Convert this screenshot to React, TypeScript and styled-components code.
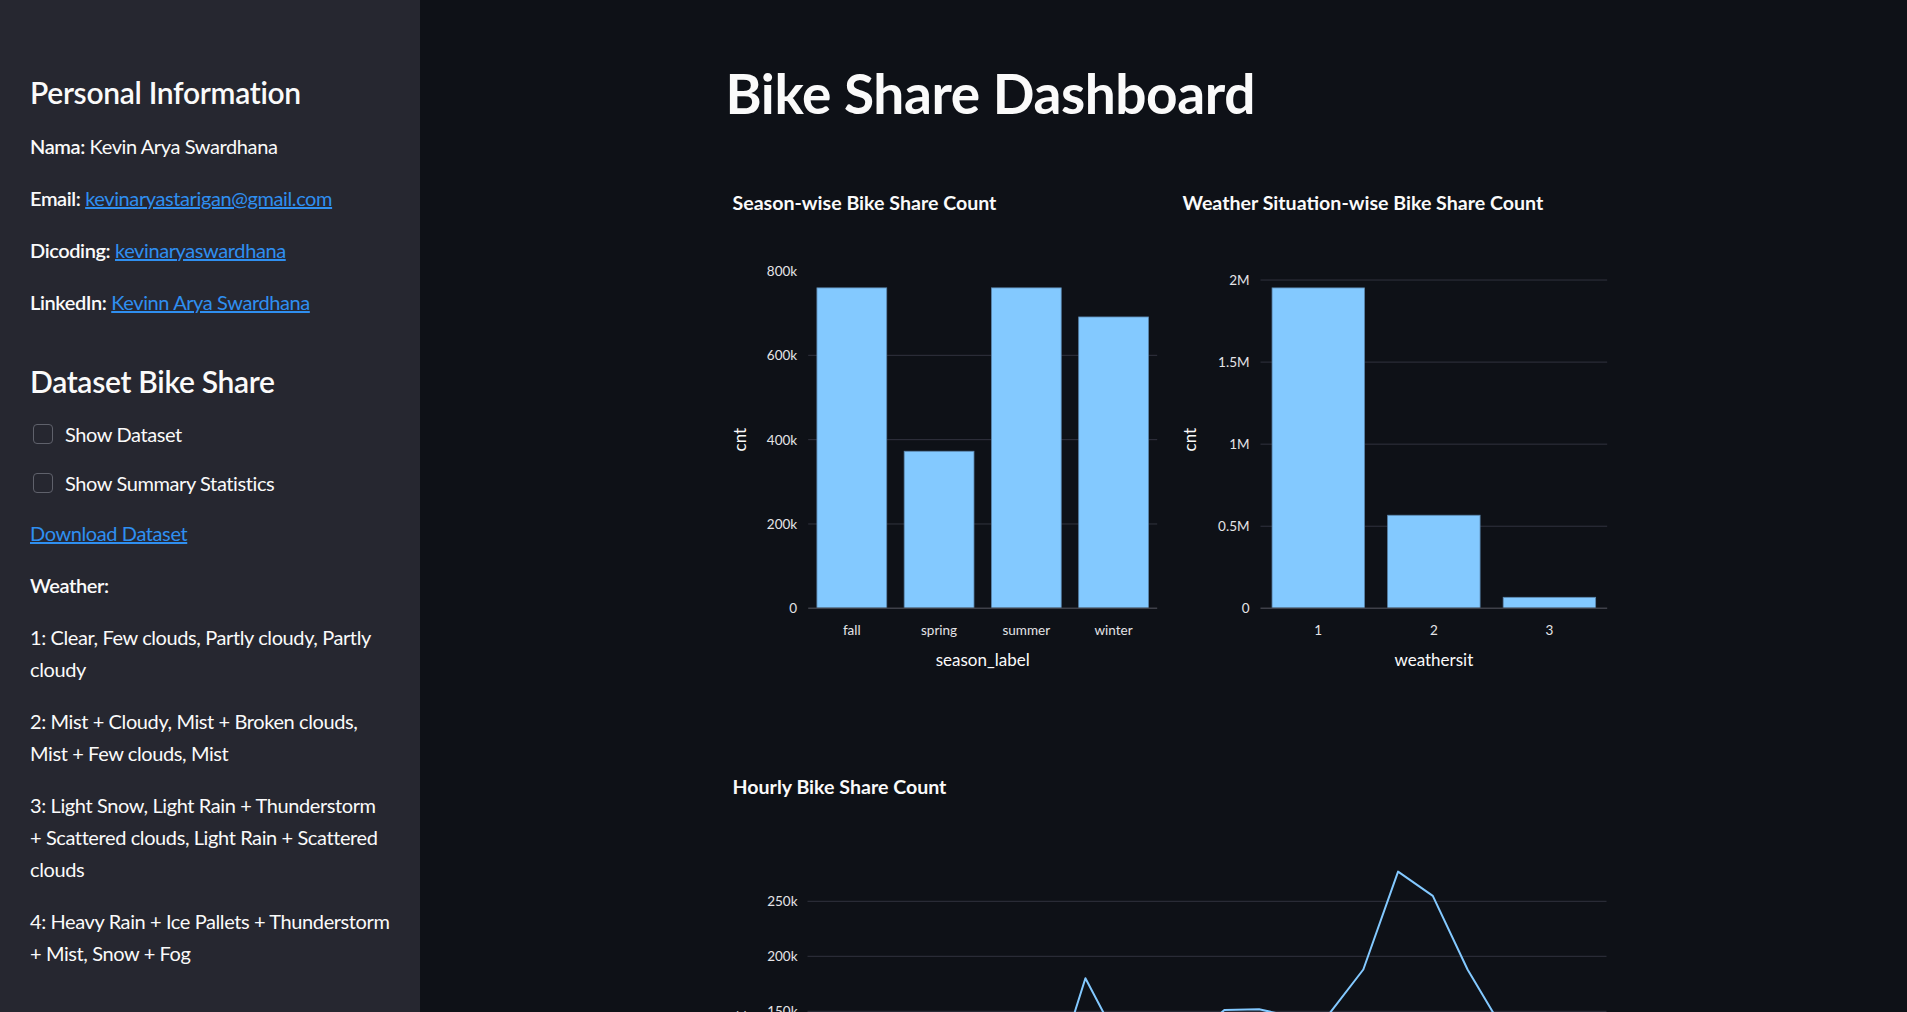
import * as React from 'react'
import styled, { createGlobalStyle } from 'styled-components'

const FONT = `Lato, "Noto Sans", "Liberation Sans", sans-serif`
const BAR = '#83c9ff'
const GRID = '#31333f'
const ZERO = '#3e4049'

// plot area shared by every chart (px inside the 563px tall chart)
const TOP = 124
const BOTTOM = 461.3
const HEIGHT = 563

interface Tick {
  v: number,
  label: string,
  grid?: boolean
}

interface BarChartProps {
  title: string,
  width: number,
  x0: number,
  x1: number,
  yMax: number,
  ticks: Array<Tick>,
  cats: Array<string>,
  values: Array<number>,
  xTitle: string
}

const BarChart = ({
  title, width, x0, x1, yMax, ticks, cats, values, xTitle
}: BarChartProps) => {
  const y = (v: number) => BOTTOM - v / yMax * (BOTTOM - TOP)
  const band = (x1 - x0) / cats.length
  return (
    <ChartSvg width={width} height={HEIGHT}>
      <ChartTitle x={8.5} y={55}>{ title }</ChartTitle>
      {ticks.map((t) => (
        <g key={ t.label }>
          {t.grid !== false && t.v !== 0 && (
            <line x1={x0} x2={x1} y1={y(t.v)} y2={y(t.v)} stroke={GRID} strokeWidth={1} />
          )}
          <TickText x={x0 - 11} y={y(t.v)} textAnchor='end'>{ t.label }</TickText>
        </g>
      ))}
      {values.map((v, i) => (
        <rect
          key={ cats[i] }
          x={x0 + band * i + band * 0.1}
          y={y(v)}
          width={band * 0.8}
          height={BOTTOM - y(v)}
          fill={BAR}
          stroke='#5b86ad'
          strokeWidth={0.8}
        />
      ))}
      <line x1={x0} x2={x1} y1={BOTTOM} y2={BOTTOM} stroke={ZERO} strokeWidth={1.5} />
      {cats.map((c, i) => (
        <TickText key={ c } x={x0 + band * (i + 0.5)} y={483} textAnchor='middle'>{ c }</TickText>
      ))}
      <AxisTitle x={(x0 + x1) / 2} y={512} textAnchor='middle'>{ xTitle }</AxisTitle>
      <AxisTitle x={15.5} y={(TOP + BOTTOM) / 2} textAnchor='middle' transform={`rotate(-90 15.5 ${(TOP + BOTTOM) / 2})`}>cnt</AxisTitle>
    </ChartSvg>
  )
}

const hourly = [
  32100, 19800, 13400, 6700, 3600, 11700, 45200, 80000, 180000, 120000, 103500, 124000,
  151200, 151800, 145000, 147000, 188000, 277000, 255000, 188000, 134900, 102900, 78400, 52400
]

const LineChart = () => {
  const x0 = 83.5
  const x1 = 882.5
  const yMin = -13600
  const yMax = 293000
  const y = (v: number) => BOTTOM - (v - yMin) / (yMax - yMin) * (BOTTOM - TOP)
  const x = (h: number) => x0 + h * (x1 - x0) / 23
  const points = hourly.map((v, h) => `${x(h)},${y(v)}`).join(' ')
  const ticks = [0, 50000, 100000, 150000, 200000, 250000]
  return (
    <ChartSvg width={880} height={HEIGHT}>
      <ChartTitle x={8.5} y={56}>Hourly Bike Share Count</ChartTitle>
      {ticks.map((t) => (
        <g key={ t }>
          <line x1={x0} x2={x1} y1={y(t)} y2={y(t)} stroke={t === 0 ? ZERO : GRID} strokeWidth={t === 0 ? 1.5 : 1} />
          <TickText x={x0 - 10} y={y(t)} textAnchor='end'>{ t === 0 ? '0' : `${t / 1000}k` }</TickText>
        </g>
      ))}
      <polyline points={points} fill='none' stroke={BAR} strokeWidth={2} strokeLinejoin='round' />
      {[0, 5, 10, 15, 20].map((h) => (
        <TickText key={ h } x={x(h)} y={483} textAnchor='middle'>{ h }</TickText>
      ))}
      <AxisTitle x={(x0 + x1) / 2} y={512} textAnchor='middle'>hr</AxisTitle>
      <AxisTitle x={15.5} y={(TOP + BOTTOM) / 2} textAnchor='middle' transform={`rotate(-90 15.5 ${(TOP + BOTTOM) / 2})`}>cnt</AxisTitle>
    </ChartSvg>
  )
}

const weatherNotes = [
  '1: Clear, Few clouds, Partly cloudy, Partly cloudy',
  '2: Mist + Cloudy, Mist + Broken clouds, Mist + Few clouds, Mist',
  '3: Light Snow, Light Rain + Thunderstorm + Scattered clouds, Light Rain + Scattered clouds',
  '4: Heavy Rain + Ice Pallets + Thunderstorm + Mist, Snow + Fog'
]

const App = () => {
  return (
    <>
      <GlobalStyle />
      <Shell>
        <Sidebar>
          <SideHeading>Personal Information</SideHeading>
          <Para><b>Nama:</b> Kevin Arya Swardhana</Para>
          <Para><b>Email:</b> <Link href='#'>kevinaryastarigan@gmail.com</Link></Para>
          <Para><b>Dicoding:</b> <Link href='#'>kevinaryaswardhana</Link></Para>
          <Para><b>LinkedIn:</b> <Link href='#'>Kevinn Arya Swardhana</Link></Para>
          <SideHeading $spaced>Dataset Bike Share</SideHeading>
          <CheckRow>
            <CheckBox type='checkbox' />
            Show Dataset
          </CheckRow>
          <CheckRow>
            <CheckBox type='checkbox' />
            Show Summary Statistics
          </CheckRow>
          <Para><Link href='#'>Download Dataset</Link></Para>
          <Para><b>Weather:</b></Para>
          {weatherNotes.map((note) => (
            <Para key={ note }>{ note }</Para>
          ))}
        </Sidebar>
        <Main>
          <Content>
            <Title>Bike Share Dashboard</Title>
            <ChartRow>
              <BarChart
                title='Season-wise Bike Share Count'
                width={430}
                x0={84.2}
                x1={433.2}
                yMax={800000}
                ticks={[
                  { v: 0, label: '0' },
                  { v: 200000, label: '200k' },
                  { v: 400000, label: '400k' },
                  { v: 600000, label: '600k' },
                  { v: 800000, label: '800k', grid: false }
                ]}
                cats={['fall', 'spring', 'summer', 'winter']}
                values={[760000, 372500, 760000, 691000]}
                xTitle='season_label'
              />
              <BarChart
                title='Weather Situation-wise Bike Share Count'
                width={430}
                x0={86.5}
                x1={433.2}
                yMax={2055000}
                ticks={[
                  { v: 0, label: '0' },
                  { v: 500000, label: '0.5M' },
                  { v: 1000000, label: '1M' },
                  { v: 1500000, label: '1.5M' },
                  { v: 2000000, label: '2M' }
                ]}
                cats={['1', '2', '3']}
                values={[1952000, 567000, 67000]}
                xTitle='weathersit'
              />
            </ChartRow>
            <LineChart />
          </Content>
        </Main>
      </Shell>
    </>
  )
}

export default App

const GlobalStyle = createGlobalStyle`
  html, body {
    margin: 0;
    padding: 0;
    background: #0e1117;
  }
`

const Shell = styled.div`
  display: flex;
  min-height: 100vh;
  font-family: ${ FONT };
  color: #fafafa;
`

const Sidebar = styled.aside`
  width: 420px;
  flex-shrink: 0;
  box-sizing: border-box;
  min-height: 100vh;
  padding: 74px 30px 60px;
  background: #262730;
  display: flex;
  flex-direction: column;
  gap: 20px;
`

const SideHeading = styled.h2<{ $spaced?: boolean }>`
  margin: 0;
  padding-top: ${ p => p.$spaced ? '25px' : '0' };
  font-size: 30px;
  line-height: 36px;
  font-weight: 600;
  letter-spacing: -0.3px;
`

const Para = styled.p`
  margin: 0;
  font-size: 20px;
  line-height: 32px;
  letter-spacing: -0.4px;

  b {
    font-weight: 600;
  }
`

const Link = styled.a`
  color: #2f8ff0;
  text-decoration: underline;
`

const CheckRow = styled.label`
  display: flex;
  align-items: center;
  gap: 12px;
  height: 29px;
  font-size: 20px;
  letter-spacing: -0.4px;
`

const CheckBox = styled.input`
  appearance: none;
  margin: 0 0 0 3px;
  width: 20px;
  height: 20px;
  box-sizing: border-box;
  border: 1px solid #5f616b;
  border-radius: 4px;
  background: #262730;
`

const Main = styled.main`
  flex: 1;
  display: flex;
  justify-content: center;
`

const Content = styled.div`
  width: 920px;
  box-sizing: border-box;
  padding: 60px 20px 200px;
  display: flex;
  flex-direction: column;
  gap: 20px;
`

const Title = styled.h1`
  margin: 0 0 1px 2px;
  font-size: 55px;
  line-height: 66px;
  font-weight: 700;
  letter-spacing: -0.4px;
`

const ChartRow = styled.div`
  display: grid;
  grid-template-columns: 1fr 1fr;
  gap: 20px;
`

const ChartSvg = styled.svg`
  display: block;
  overflow: visible;
  font-family: ${ FONT };
`

const ChartTitle = styled.text`
  fill: #fafafa;
  font-size: 19.6px;
  font-weight: 700;
  dominant-baseline: central;
`

const TickText = styled.text`
  fill: #e4e4e7;
  font-size: 13.5px;
  dominant-baseline: central;
`

const AxisTitle = styled.text`
  fill: #fafafa;
  font-size: 17px;
  dominant-baseline: central;
`
